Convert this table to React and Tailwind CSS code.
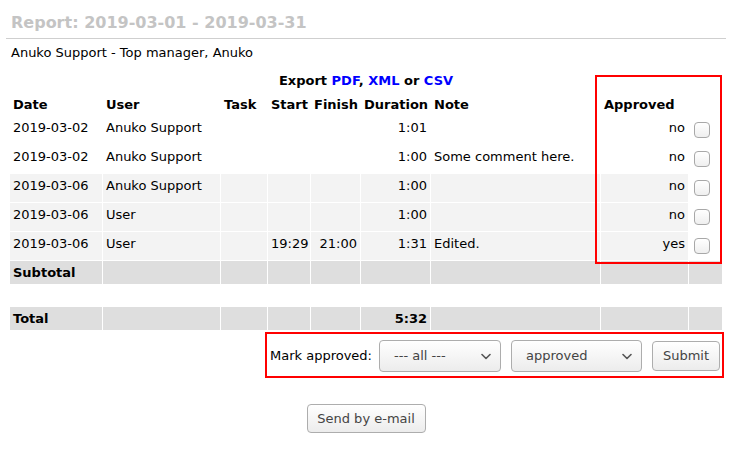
import React from "react";

const rows = [
  { date: "2019-03-02", user: "Anuko Support", start: "", finish: "", dur: "1:01", note: "", appr: "no", bg: false },
  { date: "2019-03-02", user: "Anuko Support", start: "", finish: "", dur: "1:00", note: "Some comment here.", appr: "no", bg: false },
  { date: "2019-03-06", user: "Anuko Support", start: "", finish: "", dur: "1:00", note: "", appr: "no", bg: true },
  { date: "2019-03-06", user: "User", start: "", finish: "", dur: "1:00", note: "", appr: "no", bg: true },
  { date: "2019-03-06", user: "User", start: "19:29", finish: "21:00", dur: "1:31", note: "Edited.", appr: "yes", bg: true },
];

function Chevron() {
  return (
    <svg width="10" height="7" viewBox="0 0 10 7" className="shrink-0">
      <path d="M1 1.5 L5 5.5 L9 1.5" fill="none" stroke="#555" strokeWidth="1.6" strokeLinecap="round" strokeLinejoin="round" />
    </svg>
  );
}

function Box() {
  return (
    <span className="inline-block w-[16px] h-[16px] rounded-[4px] border border-[#a8a8a8] bg-gradient-to-b from-white to-[#efefef] align-middle" />
  );
}

function SummaryRow({ label, total }) {
  const c = "bg-[#dedede] h-[23px] px-[3px] p-0";
  return (
    <tr>
      <td className={c + " font-bold"}>{label}</td>
      <td className={c}></td>
      <td className={c}></td>
      <td className={c}></td>
      <td className={c}></td>
      <td className={c + " text-right font-bold"}>{total}</td>
      <td className={c}></td>
      <td className={c}></td>
      <td className={c}></td>
    </tr>
  );
}

export default function App() {
  const th = "text-left font-bold px-[3px] h-[21px] p-0 align-middle";
  return (
    <div className="relative w-[737px] h-[453px] bg-white text-[13px] text-black font-['DejaVu_Sans',sans-serif] leading-[16px]">
      <div className="mx-[6px] w-[720px] border-b border-[#cfcfcf] pt-[13px] pb-[5px] px-[5px]">
        <div className="text-[16px] leading-[20px] font-bold text-[#c4c4c4]">Report: 2019-03-01 - 2019-03-31</div>
      </div>
      <div className="pl-[11px] mt-[6px]">Anuko Support - Top manager, Anuko</div>
      <div className="w-[714px] ml-[9px] mt-[12px] text-center font-bold">
        Export <span className="text-[#0000ff]">PDF</span>, <span className="text-[#0000ff]">XML</span> or{" "}
        <span className="text-[#0000ff]">CSV</span>
      </div>
      <table className="ml-[9px] mt-[4px] w-[714px] table-fixed border-separate border-spacing-[1px]">
        <thead>
          <tr>
            <th className={th + " w-[92px]"}>Date</th>
            <th className={th + " w-[117px]"}>User</th>
            <th className={th + " w-[46px]"}>Task</th>
            <th className={th + " w-[42px]"}>Start</th>
            <th className={th + " w-[49px]"}>Finish</th>
            <th className={th + " w-[69px]"}>Duration</th>
            <th className={th + " w-[169px]"}>Note</th>
            <th className={th + " w-[87px]"}>Approved</th>
            <th className={th + " w-[33px]"}></th>
          </tr>
        </thead>
        <tbody>
          {rows.map((r, i) => {
            const c = (r.bg ? "bg-[#f3f3f3] " : "") + "h-[28px] px-[3px] pt-0 pb-[4px] align-middle whitespace-nowrap";
            return (
              <tr key={i}>
                <td className={c}>{r.date}</td>
                <td className={c}>{r.user}</td>
                <td className={c}></td>
                <td className={c + " text-right"}>{r.start}</td>
                <td className={c + " text-right"}>{r.finish}</td>
                <td className={c + " text-right"}>{r.dur}</td>
                <td className={c}>{r.note}</td>
                <td className={c + " text-right"}>{r.appr}</td>
                <td className="h-[28px] pl-[5px] p-0 align-middle">
                  <Box />
                </td>
              </tr>
            );
          })}
          <SummaryRow label="Subtotal" total="" />
          <tr>
            <td colSpan={9} className="h-[21px] p-0"></td>
          </tr>
          <SummaryRow label="Total" total="5:32" />
        </tbody>
      </table>
      <div className="flex items-center justify-end pr-[17px] mt-[9px] text-[13px]">
        <span className="mr-[7px]">Mark approved:</span>
        <div className="w-[122px] h-[32px] rounded-[4px] border border-[#adadad] bg-gradient-to-b from-white to-[#ececec] flex items-center justify-between pl-[14px] pr-[9px] text-[#444] mr-[10px]">
          <span>--- all ---</span>
          <Chevron />
        </div>
        <div className="w-[131px] h-[32px] rounded-[4px] border border-[#adadad] bg-gradient-to-b from-white to-[#ececec] flex items-center justify-between pl-[14px] pr-[9px] text-[#444] mr-[10px]">
          <span>approved</span>
          <Chevron />
        </div>
        <div className="w-[68px] h-[30px] rounded-[4px] border border-[#adadad] bg-gradient-to-b from-white to-[#ececec] flex items-center justify-center text-[#444]">
          Submit
        </div>
      </div>
      <div className="w-[714px] ml-[9px] mt-[32px] flex justify-center">
        <div className="w-[119px] h-[29px] rounded-[4px] border border-[#adadad] bg-gradient-to-b from-white to-[#ececec] flex items-center justify-center text-[#444]">
          Send by e-mail
        </div>
      </div>
      <div className="absolute left-[595px] top-[75px] w-[127px] h-[189px] border-2 border-[#ff0000] pointer-events-none" />
      <div className="absolute left-[265px] top-[332px] w-[459px] h-[46px] border-2 border-[#ff0000] pointer-events-none" />
    </div>
  );
}
